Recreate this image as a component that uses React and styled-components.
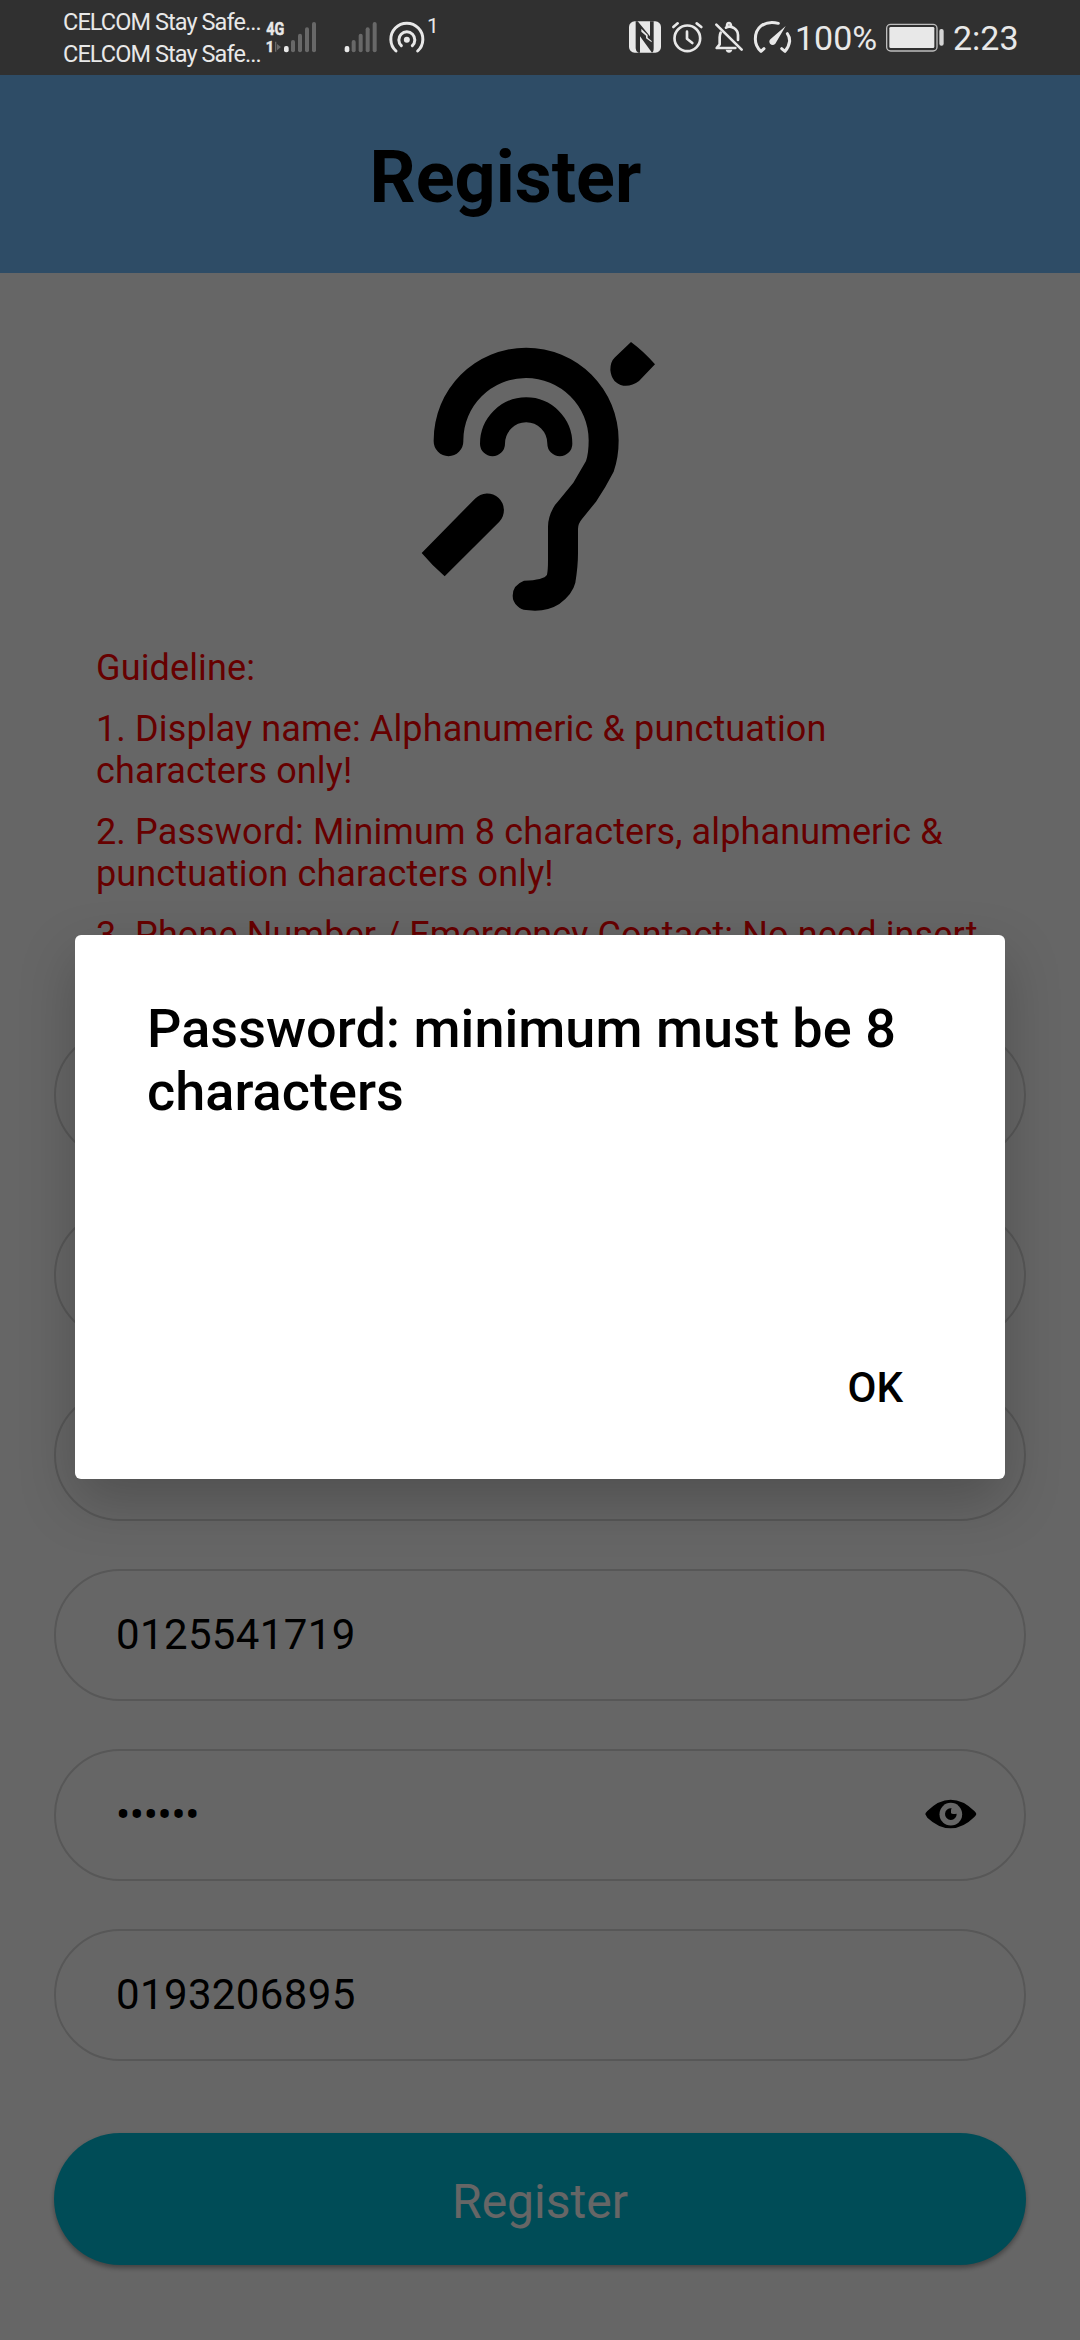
import React from 'react';
import styled, { createGlobalStyle } from 'styled-components';

const Global = createGlobalStyle`
  *, *::before, *::after { box-sizing: border-box; }
  body { margin: 0; background: #fff; font-family: Roboto, sans-serif; }
  p, h1, h2 { margin: 0; }
`;

const Screen = styled.div`
  position: relative;
  width: 1080px;
  height: 2340px;
  overflow: hidden;
  display: flex;
  flex-direction: column;
  background: #fff;
`;

const StatusBar = styled.div`
  height: 75px;
  flex: none;
  display: flex;
  justify-content: space-between;
  padding: 0 62px 0 63px;
  background: #303030;
  color: #e8e8e8;
`;

const StatusGroup = styled.div`
  display: flex;
  align-items: flex-start;
`;

const Carriers = styled.div`
  width: 203px;
  padding-top: 6px;
  font-size: 23.5px;
  line-height: 32px;
  letter-spacing: -0.92px;
  white-space: nowrap;
`;

const StatusText = styled.span`
  font-size: ${(p) => p.$size}px;
  line-height: 40px;
  margin: ${(p) => p.$top}px 0 0 ${(p) => p.$left}px;
  width: ${(p) => p.$width}px;
  white-space: nowrap;
`;

const StatusGlyph = styled.svg`
  display: block;
  flex: none;
  margin: 20px 0 0 ${(p) => p.$left || 0}px;
  overflow: visible;
`;

const Header = styled.header`
  height: 198px;
  flex: none;
  padding: 61px 0 0 369.5px;
  background: #73beff;
`;

const Title = styled.h1`
  font-size: 72px;
  line-height: 84px;
  font-weight: 700;
  color: #000;
`;

const Form = styled.main`
  flex: 1;
  display: flex;
  flex-direction: column;
  padding: 47px 54px 0;
`;

const Logo = styled.svg`
  display: block;
  flex: none;
  margin-left: 346px;
`;

const Guidelines = styled.section`
  height: 350px;
  margin: 17px 0 32px;
  padding: 0 42px;
  flex: none;
  overflow: hidden;
  display: flex;
  flex-direction: column;
  gap: 19px;
  color: #f00;
  font-size: 36px;
  line-height: 42px;
  letter-spacing: 0.13px;
`;

const Fields = styled.div`
  display: flex;
  flex-direction: column;
  gap: 48px;
`;

const Field = styled.div`
  height: 132px;
  padding: 0 47px 2px 60px;
  display: flex;
  align-items: center;
  justify-content: space-between;
  border: 2px solid #d9d9d9;
  border-radius: 66px;
  color: #000;
  font-size: 42px;
  letter-spacing: 0.36px;
`;

const Mask = styled.span`
  letter-spacing: -0.3px;
`;

const RegisterButton = styled.button`
  height: 132px;
  flex: none;
  margin-top: 72px;
  padding: 4px 0 0;
  border: 0;
  border-radius: 66px;
  background: #00bed9;
  color: #fff;
  font: 400 48px Roboto, sans-serif;
  box-shadow: 0 3px 5px rgba(0, 0, 0, 0.35);
`;

const Scrim = styled.div`
  position: absolute;
  inset: 75px 0 0;
  display: flex;
  flex-direction: column;
  align-items: center;
  padding-top: 860px;
  background: rgba(0, 0, 0, 0.6);
`;

const Dialog = styled.div`
  width: 930px;
  height: 544px;
  display: flex;
  flex-direction: column;
  justify-content: space-between;
  padding: 62px 72px 66px;
  border-radius: 6px;
  background: #fff;
  box-shadow: 0 22px 56px rgba(0, 0, 0, 0.22);
`;

const DialogTitle = styled.h2`
  font-size: 54px;
  line-height: 63px;
  font-weight: 500;
  letter-spacing: 0.03px;
  color: #000;
`;

const OkButton = styled.button`
  align-self: flex-end;
  margin-right: 30px;
  padding: 0;
  border: 0;
  background: none;
  color: #000;
  font: 500 42px/50px Roboto, sans-serif;
`;

const BARS = [
  [732, 138, 14],
  [753, 120, 12],
  [774, 101, 12],
  [795, 82, 12],
  [816, 66, 12],
];

function SignalBars() {
  return BARS.map(([x, y, w], i) => (
    <rect key={x} x={x} y={y} width={w} height={157 - y} rx="6" fill={i ? '#686868' : '#e8e8e8'} />
  ));
}

function MobileSignal() {
  return (
    <StatusGlyph width="52" height="35" viewBox="678 60 156 105">
      <g fill="#e8e8e8" stroke="#e8e8e8" strokeWidth="1.500" fontFamily="Roboto" fontWeight="700">
        <text x="679" y="105" fontSize="55" textLength="54" lengthAdjust="spacingAndGlyphs">4G</text>
        <text x="677" y="157" fontSize="46" textLength="25" lengthAdjust="spacingAndGlyphs">1</text>
      </g>
      <path d="M705 125h4v30h-4zM711 132l12 9-12 10z" fill="#686868" />
      <SignalBars />
    </StatusGlyph>
  );
}

function SecondSignal() {
  return (
    <StatusGlyph width="34" height="35" viewBox="730 60 102 105" $left={26}>
      <SignalBars />
    </StatusGlyph>
  );
}

function Hotspot() {
  return (
    <StatusGlyph width="36" height="35" viewBox="1046 60 108 105" $left={11}>
      <g fill="none" stroke="#e8e8e8" strokeWidth="9" strokeLinecap="round">
        <path d="M1067 153A48 48 0 1 1 1132 153" />
        <path d="M1083 137A24 24 0 1 1 1116 137" />
      </g>
      <circle cx="1099.500" cy="119" r="9" fill="#e8e8e8" />
    </StatusGlyph>
  );
}

function Nfc() {
  return (
    <StatusGlyph width="32" height="33" viewBox="87 60 96 99">
      <rect x="87" y="64" width="96" height="94" rx="17" fill="#e8e8e8" />
      <path d="M107 64H113L150 109V64H161V145Q161 156 156 158L120 109V158H115Q107 154 107 145Z" fill="#303030" />
      <path d="M124 86L143 105V113L155 123V127L138 115V107L124 95Z" fill="#e8e8e8" />
    </StatusGlyph>
  );
}

function Alarm() {
  return (
    <StatusGlyph width="31" height="33" viewBox="215 60 93 99" $left={11}>
      <g fill="none" stroke="#e8e8e8" strokeWidth="8" strokeLinecap="round">
        <circle cx="261" cy="115" r="38.500" />
        <path d="M219 81L232 70M303 81L289 70" />
        <path d="M260 95V116L276 129" strokeLinejoin="round" />
      </g>
    </StatusGlyph>
  );
}

function MutedBell() {
  return (
    <StatusGlyph width="28" height="33" viewBox="345 60 84 99" $left={12}>
      <g fill="none" stroke="#e8e8e8" strokeWidth="8" strokeLinecap="round" strokeLinejoin="round">
        <path d="M349 74L425 149" />
        <path d="M362 98Q359 104 359 112V133L350 144H406" />
        <path d="M378 83Q387 77 400 83Q414 91 414 105V120" />
        <path d="M381 76Q382 69 387 69Q392 69 393 77" />
      </g>
      <path d="M377 149H397Q395 158 387 158Q379 158 377 149Z" fill="#e8e8e8" />
    </StatusGlyph>
  );
}

function Gauge() {
  return (
    <StatusGlyph width="37" height="33" viewBox="463 60 111 99" $left={11}>
      <g fill="none" stroke="#e8e8e8" strokeWidth="9" strokeLinecap="round" strokeLinejoin="round">
        <path d="M493 146L484 154Q467 139 467 117Q467 91 485 77Q507 62 536 70" />
        <path d="M563 101Q570 110 570 123Q568 140 556 154L546 146" />
      </g>
      <path d="M558 78L527 131Q519 139 511 131Q506 123 513 117Z" fill="#e8e8e8" />
    </StatusGlyph>
  );
}

function Battery() {
  return (
    <StatusGlyph width="58" height="33" viewBox="858 60 174 99">
      <rect x="860" y="73" width="151" height="80" rx="12" fill="none" stroke="#bdbdbd" strokeWidth="4" />
      <rect x="868" y="81" width="135" height="63" rx="4" fill="#e8e8e8" />
      <rect x="1018" y="87" width="13" height="50" rx="6" fill="#d4d4d4" />
    </StatusGlyph>
  );
}

function EarLogo() {
  return (
    <Logo width="280" height="310" viewBox="0 0 840 930">
      <path d="M101 361A277.500 278 0 0 1 656 361Q656 413 641 455Q616 504 588 545L546 597Q533 612 534 630V700Q534 740 526 788Q518 822 478 852Q447 872 405 872L378 870Q364 870 352 858Q338 845 338 827Q338 795 372 782Q432 780 441 764Q444 750 444 720V620Q444 588 465 555Q475 543 520 488L558 423Q566 400 566 361A188 187 0 0 0 190 361V364A44.500 44.500 0 0 1 101 364Z" />
      <path d="M277.500 371A101 101.500 0 0 1 479.500 371" fill="none" stroke="#000" strokeWidth="75" strokeLinecap="round" />
      <path d="M65 699L225 536A50 50 0 0 1 298 605L134 769Q98 738 65 699Z" />
      <path d="M693 66L645 112Q631 125 631 150Q635 190 670 197Q695 200 717 183L765 133Q731 94 693 66Z" />
    </Logo>
  );
}

function Eye() {
  return (
    <svg width="52" height="30" viewBox="134 239 156 90">
      <path d="M135 285Q134 282 141 275Q175 241 211 241Q248 241 282 275Q288 281 288 284Q288 287 282 293Q248 327 211 327Q175 327 141 295Z" />
      <circle cx="211.500" cy="284.500" r="34" fill="#fff" />
      <path d="M214 267Q210 273 212 281Q214 286 229 283A17.500 17.500 0 1 1 214 267Z" />
    </svg>
  );
}

export default function App() {
  return (
    <Screen>
      <Global />
      <StatusBar>
        <StatusGroup>
          <Carriers>
            <div>CELCOM Stay Safe...</div>
            <div>CELCOM Stay Safe...</div>
          </Carriers>
          <MobileSignal />
          <SecondSignal />
          <Hotspot />
          <StatusText $size={21} $top={6} $left={2} $width={12}>1</StatusText>
        </StatusGroup>
        <StatusGroup>
          <Nfc />
          <Alarm />
          <MutedBell />
          <Gauge />
          <StatusText $size={34} $top={18} $left={4} $width={91}>100%</StatusText>
          <Battery />
          <StatusText $size={34} $top={18} $left={9} $width={65}>2:23</StatusText>
        </StatusGroup>
      </StatusBar>
      <Header>
        <Title>Register</Title>
      </Header>
      <Form>
        <EarLogo />
        <Guidelines>
          <p>Guideline:</p>
          <p>1. Display name: Alphanumeric &amp; punctuation characters only!</p>
          <p>2. Password: Minimum 8 characters, alphanumeric &amp; punctuation characters only!</p>
          <p>3. Phone Number / Emergency Contact: No need insert</p>
        </Guidelines>
        <Fields>
          <Field />
          <Field />
          <Field />
          <Field>0125541719</Field>
          <Field>
            <Mask>••••••</Mask>
            <Eye />
          </Field>
          <Field>0193206895</Field>
        </Fields>
        <RegisterButton>Register</RegisterButton>
      </Form>
      <Scrim>
        <Dialog>
          <DialogTitle>Password: minimum must be 8 characters</DialogTitle>
          <OkButton>OK</OkButton>
        </Dialog>
      </Scrim>
    </Screen>
  );
}
